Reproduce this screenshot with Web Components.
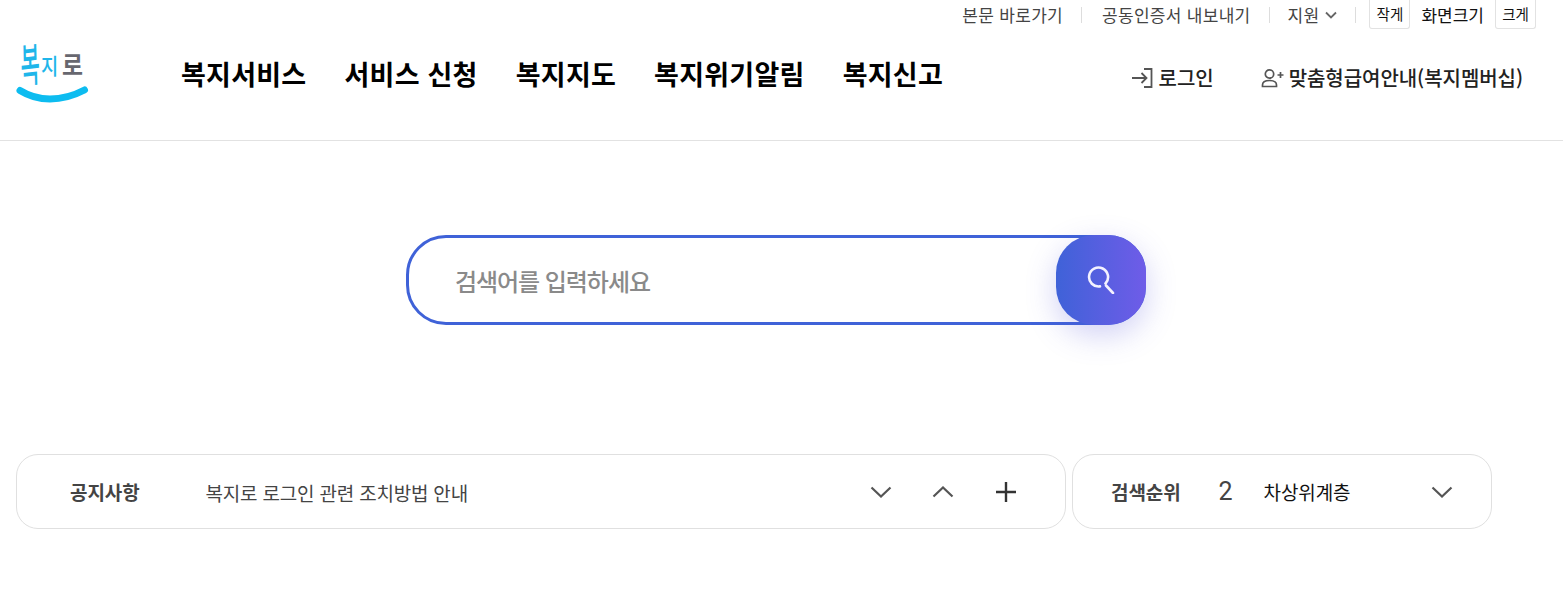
<!DOCTYPE html>
<html lang="ko">
<head>
<meta charset="utf-8">
<title>복지로</title>
<style>
  html, body { margin: 0; background: #fff; }
  body { font-family: "Noto Sans CJK KR", "Noto Sans", sans-serif; color: #111; overflow: hidden; }
</style>
</head>
<body>
<bok-header></bok-header>
<bok-search></bok-search>
<bok-strip></bok-strip>

<script>
// top utility links
class UtilBar extends HTMLElement {
  constructor() {
    super();
    this.attachShadow({ mode: "open" });
    this.shadowRoot.innerHTML = `
      <style>
        :host { display: flex; justify-content: flex-end; align-items: center; height: 29px; padding-right: 27px; font-size: 17px; letter-spacing: .3px; color: #444; }
        a { color: inherit; text-decoration: none; white-space: nowrap; line-height: 28px; }
        i { display: block; width: 1px; height: 16px; background: #ddd; margin: 0 18px; }
        i.first { margin-right: 20px; }
        .help { display: flex; align-items: center; gap: 6px; }
        .size { display: flex; align-items: center; color: #111; margin-left: -5px; }
        .size span { margin: 0 11px; letter-spacing: 0; }
        button { all: unset; box-sizing: border-box; width: 41px; height: 29px; border: 1px solid #e2e2e2; border-top: 0; border-radius: 0 0 3px 3px; font-size: 14.500px; letter-spacing: 0; text-align: center; line-height: 28px; color: #111; background: #fff; }
      </style>
      <a href="#">본문 바로가기</a><i class="first"></i>
      <a href="#">공동인증서 내보내기</a><i></i>
      <a href="#" class="help">지원
        <svg width="12" height="8" viewBox="0 0 12 8" fill="none" stroke="#666" stroke-width="1.800"><path d="M1 1.500 6 6.500l5-5"/></svg>
      </a><i></i>
      <div class="size"><button>작게</button><span>화면크기</span><button>크게</button></div>
    `;
  }
}
customElements.define("bok-util", UtilBar);

class SiteLogo extends HTMLElement {
  constructor() {
    super();
    this.attachShadow({ mode: "open" });
    this.shadowRoot.innerHTML = `
      <style>
        :host { display: block; width: 76px; height: 64px; position: relative; }
        span { position: absolute; line-height: 1; font-weight: 500; transform-origin: 0 0; white-space: nowrap; }
        .a { left: 4px; top: -1px; font-size: 24px; color: #1fb6ea; transform: scale(.87, 1.9) rotate(-3deg); }
        .b { left: 25px; top: 11px; font-size: 22px; color: #1fb6ea; transform: scaleX(.85); }
        .c { left: 46px; top: 9px; font-size: 24px; font-weight: 700; color: #67676f; transform: scale(.95, 1.1); }
        svg { position: absolute; left: 0; top: 0; }
      </style>
      <span class="a">복</span><span class="b">지</span><span class="c">로</span>
      <svg width="76" height="64" viewBox="0 0 76 64" fill="none"><path d="M4 48.5C12 53.5 22 57 34 57c12 0 24-3.500 34.500-9" stroke="#0dbcf0" stroke-width="7" stroke-linecap="round"/></svg>
    `;
  }
}
customElements.define("bok-logo", SiteLogo);

class SiteHeader extends HTMLElement {
  constructor() {
    super();
    this.attachShadow({ mode: "open" });
    this.shadowRoot.innerHTML = `
      <style>
        :host { display: block; height: 141px; box-sizing: border-box; border-bottom: 1px solid #e2e2e2; }
        .main { display: flex; align-items: flex-start; padding: 13px 40px 0 16px; }
        nav { display: flex; gap: 38px; margin-left: 89px; font-size: 27px; font-weight: 700; letter-spacing: .25px; line-height: 36px; color: #000; margin-top: 14px; white-space: nowrap; }
        .right { margin-left: auto; display: flex; gap: 47px; font-size: 20px; font-weight: 500; line-height: 30px; letter-spacing: -0.05px; color: #222; margin-top: 21px; white-space: nowrap; }
        .right div { display: flex; align-items: center; gap: 6px; }
        .right div + div { gap: 5px; }
      </style>
      <bok-util></bok-util>
      <div class="main">
        <bok-logo></bok-logo>
        <nav><span>복지서비스</span><span>서비스 신청</span><span>복지지도</span><span>복지위기알림</span><span>복지신고</span></nav>
        <div class="right">
          <div>
            <svg width="22" height="22" viewBox="0 0 22 22" fill="none" stroke="#555" stroke-width="1.800"><path d="M1 11h14M10.500 6l5 5-5 5"/><path d="M13 2h7.500v18H13"/></svg>
            로그인
          </div>
          <div>
            <svg width="23" height="22" viewBox="0 0 23 22" fill="none" stroke="#555" stroke-width="1.700"><circle cx="8.500" cy="7" r="4.200"/><path d="M1.500 19.500V18c0-3 3-4.500 7-4.500s7 1.500 7 4.500v1.500zM16.500 8h6M19.500 5v6"/></svg>
            맞춤형급여안내(복지멤버십)
          </div>
        </div>
      </div>
    `;
  }
}
customElements.define("bok-header", SiteHeader);

class SearchBox extends HTMLElement {
  constructor() {
    super();
    this.attachShadow({ mode: "open" });
    this.shadowRoot.innerHTML = `
      <style>
        :host { display: block; padding: 94px 0 0 406px; }
        .box { box-sizing: border-box; width: 740px; height: 90px; border: 3px solid #3f62d8; border-radius: 40px 38px 38px 40px; display: flex; align-items: center; position: relative; padding-left: 46px; background: #fff; }
        .ph { font-size: 24px; font-weight: 500; letter-spacing: -1.05px; color: #8a8a8a; }
        .go { position: absolute; right: -3px; top: -3px; width: 90px; height: 90px; border-radius: 38px; background: linear-gradient(90deg, #3f62d8, #6f5ce8); box-shadow: 0 10px 30px rgba(90, 90, 220, .28); display: flex; align-items: center; justify-content: center; }
      </style>
      <div class="box">
        <span class="ph">검색어를 입력하세요</span>
        <div class="go">
          <svg width="28" height="28" viewBox="0 0 28 28" fill="none" stroke="#f4f2ff" stroke-width="2.600" stroke-linecap="round"><path d="M13 20.400A9.500 9.500 0 1 1 18.500 17.500"/><path d="M19 19.500 26 27"/></svg>
        </div>
      </div>
    `;
  }
}
customElements.define("bok-search", SearchBox);

class NoticeStrip extends HTMLElement {
  constructor() {
    super();
    this.attachShadow({ mode: "open" });
    const down = '<svg width="22" height="12" viewBox="0 0 22 12" fill="none" stroke="#555" stroke-width="2.200"><path d="M1.500 1.500 11 10.500l9.500-9"/></svg>';
    const up = '<svg width="22" height="12" viewBox="0 0 22 12" fill="none" stroke="#555" stroke-width="2.200"><path d="M1.500 10.500 11 1.500l9.500 9"/></svg>';
    this.shadowRoot.innerHTML = `
      <style>
        :host { display: flex; gap: 6px; padding: 129px 0 0 16px; }
        .card { box-sizing: border-box; height: 75px; border: 1px solid #e0e0e0; border-radius: 22px; display: flex; align-items: center; background: #fff; white-space: nowrap; }
        .notice { width: 1050px; padding-left: 53px; }
        .rank { width: 420px; padding-left: 38px; }
        b { font-size: 19px; font-weight: 700; letter-spacing: -0.1px; color: #444; }
        .txt { font-size: 19px; letter-spacing: -0.2px; color: #444; margin: 2px 0 0 66px; }
        .ctl { margin-left: auto; display: flex; align-items: center; gap: 40px; padding-right: 48px; }
        .ctl .plus { margin-left: 1px; }
        .num { font-family: Roboto, sans-serif; font-size: 25px; font-weight: 400; color: #444; margin-left: 38px; width: 45px; }
        .term { font-size: 19px; letter-spacing: -0.1px; color: #111; }
        .rank svg { margin-left: auto; margin-right: 38px; }
      </style>
      <div class="card notice">
        <b>공지사항</b>
        <span class="txt">복지로 로그인 관련 조치방법 안내</span>
        <div class="ctl">${down}${up}
          <svg class="plus" width="22" height="22" viewBox="0 0 22 22" fill="none" stroke="#333" stroke-width="2.400"><path d="M11 1v20M1 11h20"/></svg>
        </div>
      </div>
      <div class="card rank">
        <b>검색순위</b><span class="num">2</span><span class="term">차상위계층</span>${down}
      </div>
    `;
  }
}
customElements.define("bok-strip", NoticeStrip);
</script>
</body>
</html>
